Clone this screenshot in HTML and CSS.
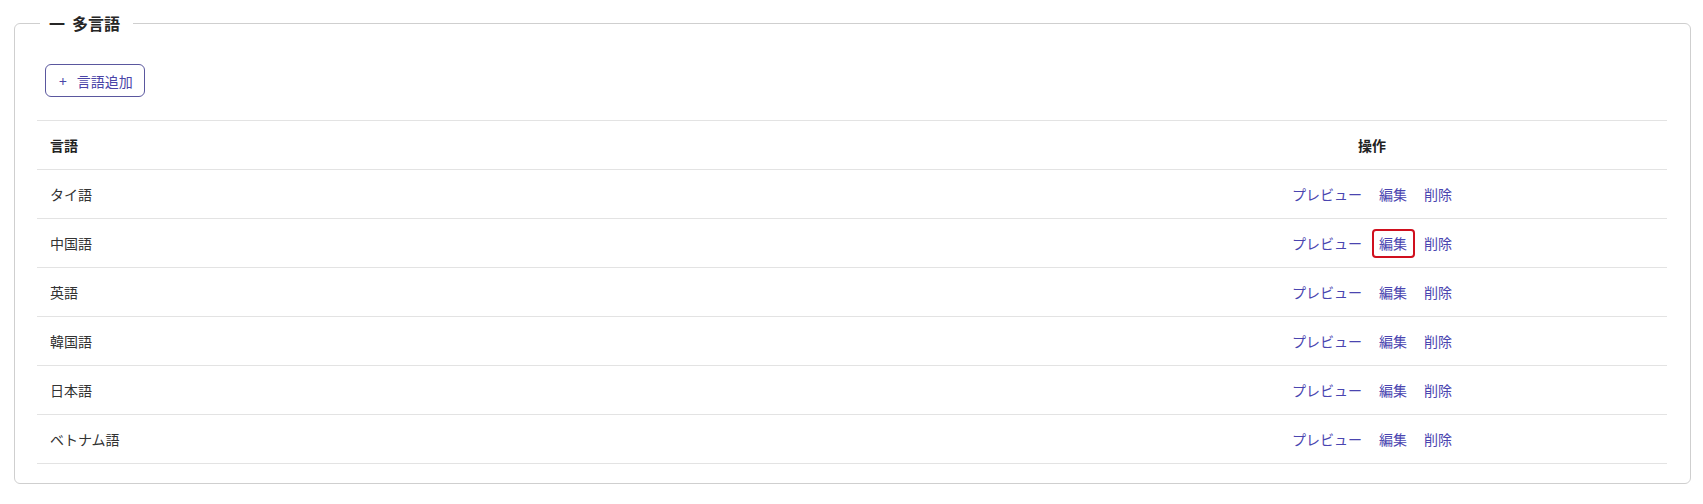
FILE: index.html
```html
<!DOCTYPE html>
<html lang="ja">
<head>
<meta charset="utf-8">
<title>多言語</title>
<link rel="stylesheet" href="styles.css">
</head>
<body>
<fieldset class="panel">
  <legend class="panel-title"><span class="dash">一</span>多言語</legend>
  <button class="add-btn" type="button"><span class="plus">+</span>言語追加</button>
  <table class="lang-table">
    <thead>
      <tr><th class="col-lang">言語</th><th class="col-ops">操作</th></tr>
    </thead>
    <tbody>
      <tr><td>タイ語</td><td class="ops"><div class="links"><a>プレビュー</a><a>編集</a><a>削除</a></div></td></tr>
      <tr><td>中国語</td><td class="ops"><div class="links"><a>プレビュー</a><a class="marked">編集</a><a>削除</a></div></td></tr>
      <tr><td>英語</td><td class="ops"><div class="links"><a>プレビュー</a><a>編集</a><a>削除</a></div></td></tr>
      <tr><td>韓国語</td><td class="ops"><div class="links"><a>プレビュー</a><a>編集</a><a>削除</a></div></td></tr>
      <tr><td>日本語</td><td class="ops"><div class="links"><a>プレビュー</a><a>編集</a><a>削除</a></div></td></tr>
      <tr><td>ベトナム語</td><td class="ops"><div class="links"><a>プレビュー</a><a>編集</a><a>削除</a></div></td></tr>
    </tbody>
  </table>
</fieldset>
</body>
</html>
```

FILE: styles.css
```css
html, body {
  margin: 0;
  padding: 0;
  background: #ffffff;
}
body {
  font-family: "Noto Sans CJK JP", "Noto Sans", sans-serif;
  font-size: 14px;
  color: #333333;
}
.panel {
  margin: 12px 12px 0 14px;
  border: 1px solid #cfcfcf;
  border-radius: 6px;
  padding: 0 23px 19px 22px;
  min-width: 0;
}
.panel-title {
  margin-left: 3px;
  padding: 0 13px 0 9px;
  font-size: 16px;
  font-weight: 700;
  color: #262626;
  line-height: 22px;
}
.dash {
  display: inline-block;
  margin-right: 7px;
  font-weight: 700;
}
.add-btn {
  display: inline-flex;
  align-items: center;
  margin: 30px 0 0 8px;
  height: 33px;
  padding: 0 11px 0 13px;
  border: 1px solid #5a579e;
  border-radius: 6px;
  background: #ffffff;
  color: #4a45a8;
  font-family: inherit;
  font-size: 14px;
}
.plus {
  margin-right: 10px;
  font-size: 14px;
}
.lang-table {
  margin-top: 23px;
  width: 100%;
  border-collapse: collapse;
}
.lang-table th,
.lang-table td {
  height: 48px;
  padding: 0 13px;
  border-bottom: 1px solid #e3e3e3;
  text-align: left;
  font-weight: 400;
  color: #333333;
}
.lang-table thead tr {
  border-top: 1px solid #e3e3e3;
}
.lang-table th {
  font-weight: 700;
  color: #222222;
}
.lang-table .col-ops {
  width: 590px;
  text-align: center;
  padding: 0;
}
.lang-table td.ops {
  padding: 0;
}
.links {
  display: flex;
  justify-content: center;
  gap: 17px;
}
.links a {
  position: relative;
  color: #4a45b0;
  cursor: pointer;
}
.links a.marked::after {
  content: "";
  position: absolute;
  left: -7px;
  right: -8px;
  top: -4px;
  bottom: -5px;
  border: 2px solid #d0101e;
  border-radius: 4px;
}
```
